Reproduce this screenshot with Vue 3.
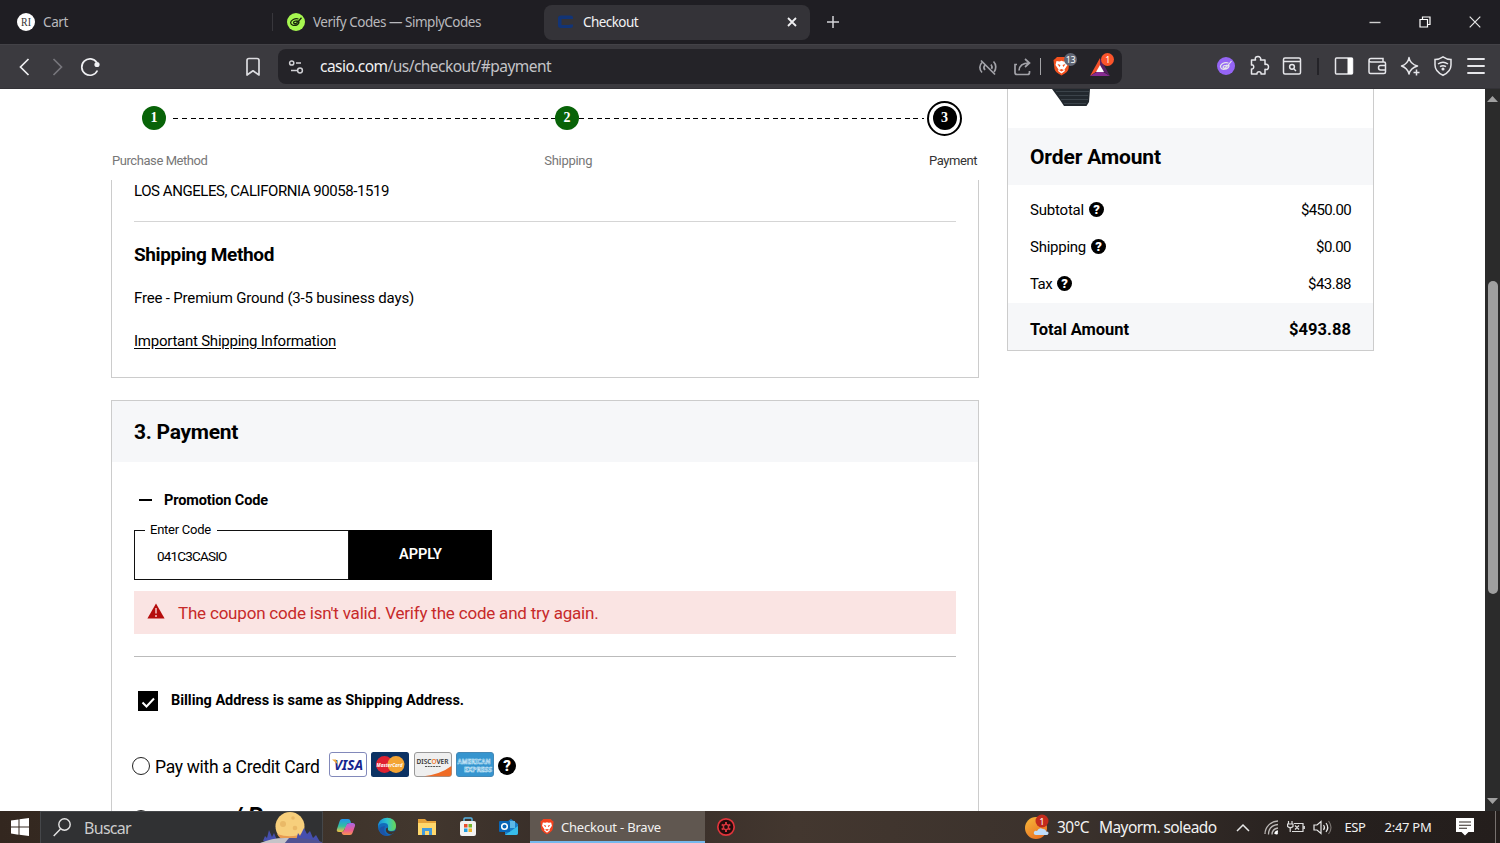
<script setup>
// Spreads or tightens the letters of a label so it takes up the given width.
const vFit = {
  mounted(el, { value }) {
    const natural = el.getBoundingClientRect().width
    const count = el.textContent.length
    el.style.letterSpacing = `${(value - natural) / count}px`
  },
}

const amounts = [
  { label: 'Subtotal', labelWidth: 54, value: '$450.00', valueWidth: 50 },
  { label: 'Shipping', labelWidth: 56, value: '$0.00', valueWidth: 35 },
  { label: 'Tax', labelWidth: 22, value: '$43.88', valueWidth: 43 },
]
</script>

<template>
  <div class="screen">
    <header class="tabs">
      <div class="tab tab-cart">
        <svg width="18" height="18" viewBox="0 0 18 18"><circle cx="9" cy="9" r="9" fill="#fff" /><text x="9" y="13" text-anchor="middle" font-family="Liberation Serif, serif" font-size="12" textLength="10" lengthAdjust="spacingAndGlyphs" fill="#333">RI</text></svg>
        <span v-fit="25">Cart</span>
      </div>
      <div class="tab tab-codes">
        <svg width="18" height="18" viewBox="0 0 18 18"><circle cx="9" cy="9" r="9" fill="#a6f750" /><path d="M11.500 6C8 5 3.600 7 3.600 9.800c.3 2.700 4.300 3.400 6.800 1.800 1.800-1.200 2-2.800.9-3.600M6.500 10c0-2 3.500-2.600 3.700-.9.100 1.600-3 2.300-3.700.9M9.500 7.500l1.500 1.300 3.500-4" fill="none" stroke="#17230c" stroke-width="1.300" /></svg>
        <span v-fit="168">Verify Codes — SimplyCodes</span>
      </div>
      <div class="tab tab-active">
        <svg width="17" height="16" viewBox="0 0 17 16"><path d="M16 5V3.500Q16 1.500 13.500 1.500H4Q1 1.500 1 4v7.500Q1 14 4 14h9.500q2.500 0 2.500-2V10.500h-3.500v.5H4.500V5H12.500z" fill="#123476" /></svg>
        <span v-fit="55">Checkout</span>
        <svg class="tab-close" width="10" height="10" viewBox="0 0 10 10"><path d="M1 1l8 8M9 1L1 9" stroke="#f0f0f2" stroke-width="1.800" /></svg>
      </div>
      <svg class="tab-new" width="12" height="12" viewBox="0 0 12 12"><path d="M6 0v12M0 6h12" stroke="#d4d4d8" stroke-width="1.500" /></svg>
      <div class="window-controls">
        <svg width="12" height="12" viewBox="0 0 12 12"><path d="M.5 6.500h11" stroke="#d0d0d0" stroke-width="1.400" /></svg>
        <svg width="12" height="12" viewBox="0 0 12 12"><path d="M1 3.500h7.500V11H1zM3.500 3.500V1H11v7.500H8.500" fill="none" stroke="#fff" stroke-width="1.200" /></svg>
        <svg width="12" height="12" viewBox="0 0 12 12"><path d="M.7.700l10.600 10.600M11.300.7L.7 11.300" stroke="#e8e8e8" stroke-width="1.200" /></svg>
      </div>
    </header>

    <nav class="toolbar">
      <svg class="tool back" viewBox="0 0 24 24"><path d="M15.500 4l-8 8 8 8" stroke="#efeff2" /></svg>
      <svg class="tool forward" viewBox="0 0 24 24"><path d="M8.500 4l8 8-8 8" stroke="#77767c" /></svg>
      <svg class="tool reload" viewBox="0 0 24 24"><path d="M19.400 15.500A8.200 8.200 0 1 1 18.800 7.500" stroke="#efeff2" /><circle cx="19" cy="9.500" r="2.600" fill="#efeff2" /></svg>
      <svg class="tool bookmark" viewBox="0 0 24 24"><path d="M6 20V5.500Q6 3.500 8 3.500h8q2 0 2 2V20l-6-4.200z" stroke="#dcdce0" stroke-linejoin="round" /></svg>
      <div class="address">
        <svg class="tune" width="16" height="16" viewBox="0 0 16 16"><g fill="none" stroke="#cfcfd3" stroke-width="1.500"><circle cx="3.700" cy="4" r="2.100" /><path d="M8 4h5M3 11.500h6" /><circle cx="12" cy="11.500" r="2.400" /></g></svg>
        <span class="url" v-fit="231"><b>casio.com</b>/us/checkout/#payment</span>
        <svg class="tool muted" viewBox="0 0 24 24"><path d="M5 5.500l14 14M6 17.500c-3-3-2.700-7.500 0-10M9 15c-1.300-1.500-1.300-3.400-.2-4.800M17.500 6.500c3 3 2.800 7.600.6 10.500M15 9.500c1.200 1.500 1.200 3 .6 4.300" stroke="#a2a2a8" /></svg>
        <svg class="tool share" viewBox="0 0 24 24"><path d="M7 9.500H5v8Q5 19.500 7 19.500h10.500q2 0 2-2V16M9 15.500c.4-4.500 3-7.500 10-7.500M15 4l4.500 4-4.500 4" stroke="#a2a2a8" /></svg>
        <i class="address-rule"></i>
        <span class="badge-icon brave">
          <svg width="17" height="20" viewBox="0 0 17 20"><path d="M4 1h9l2 2 1.500 1-1 9Q15 16 8.500 19.500 2 16 1.500 13L.5 4 2 3z" fill="#f4511e" /><path d="M3.500 5l3 .5 2-.7 2 .7 3-.5 1 4-3 4.500.4 1.500-3.400 2.500L5.100 15l.4-1.500L2.500 9z" fill="#fff" /><path d="M4.500 8l3 1-1 2zM12.500 8l-3 1 1 2zM6 14l2.500-1L11 14l-2.500 1.500z" fill="#f4511e" /></svg>
          <em class="grey">13</em>
        </span>
        <span class="badge-icon rewards">
          <svg width="20" height="18" viewBox="0 0 20 18"><path d="M10 0L0 18l10-7z" fill="#f4512b" /><path d="M0 18h20l-10-6z" fill="#872b91" /><path d="M10 0l10 18-10-7z" fill="#582064" /><path d="M10 7l4 7H6z" fill="#fff" /></svg>
          <em class="red">1</em>
        </span>
      </div>
      <div class="extensions">
        <svg viewBox="0 0 24 24"><circle cx="12" cy="12" r="9" fill="#9565f5" stroke="none" /><path d="M14.500 9C10 7.500 6 10.500 6.500 13.200c1 3.500 7.500 2.200 8.500-1 .3-1-1-1-1.500-1M9 13.200c0-2 3.500-2 3.300-.6-.2 1.800-3 2-3.300.6M12 11l1.500 1 4-5" stroke-width="1.200" /></svg>
        <svg viewBox="0 0 24 24"><path d="M4.500 6h4c-1-3 1-3.500 2.500-3.500S14.500 4 13.500 6h4.500v4.500c3-.8 3.500 1 3.500 2.500s-1 3.300-3.500 2.300V20H14c.7-3-4.500-3-4 0H4.500v-5c3 .6 3-5 0-4z" stroke-linejoin="round" /></svg>
        <svg viewBox="0 0 24 24"><rect x="3.500" y="4" width="17" height="16" rx="1.500" /><path d="M4 7.500h16" /><circle cx="12" cy="12.800" r="2.400" /><path d="M14 15l2 2" /></svg>
        <i></i>
        <svg viewBox="0 0 24 24"><rect x="3.500" y="4" width="17" height="16" rx="1" /><path d="M15.500 4H20.500V20H15.500z" fill="#fff" stroke="none" /></svg>
        <svg viewBox="0 0 24 24"><path d="M4 6.500Q4 4.500 6 4.500h12v3M4 6v12q0 1.500 1.500 1.500H19q1.500 0 1.500-1.500V9.500Q20.500 8 19 8H6Q4 8 4 6M20.500 11.500h-5q-2 0-2 2.200t2 2.200h5" /></svg>
        <svg viewBox="0 0 24 24"><path d="M11 3.500Q12 10 19.500 12q-7 2-8.500 8-1.500-6-7.500-8Q10 10 11 3.500z" stroke-linejoin="round" /><path d="M18.500 15.500v6M15.500 18.500h6" /></svg>
        <svg viewBox="0 0 24 24"><path d="M12 2.800Q16 5.500 20 5.500v5.500q0 6.500-8 10.300Q4 17.500 4 11V5.500q4 0 8-2.700z" /><path d="M7 10q5-3.500 10 0M9 12.700q3-2 6 0" /><circle cx="12" cy="15" r=".8" fill="#e6e6ea" /></svg>
        <svg viewBox="0 0 24 24"><path d="M3.300 5h17.400M3.300 12h17.400M3.300 19h17.400" stroke-width="1.800" /></svg>
      </div>
    </nav>

    <div class="viewport">
      <main class="checkout">
        <div class="stepper">
          <div class="track">
            <b class="dot">1</b><i class="dash first"></i><b class="dot">2</b><i class="dash"></i><span class="ring"><b class="dot current">3</b></span>
          </div>
          <div class="step-labels">
            <span v-fit="95.500">Purchase Method</span><span v-fit="48">Shipping</span><span class="now" v-fit="48">Payment</span>
          </div>
        </div>
        <section class="card shipping">
          <p class="city"><span v-fit="255">LOS ANGELES, CALIFORNIA 90058-1519</span></p>
          <h3><span v-fit="140">Shipping Method</span></h3>
          <p class="method"><span v-fit="280">Free - Premium Ground (3-5 business days)</span></p>
          <p class="info"><a v-fit="202">Important Shipping Information</a></p>
        </section>
        <section class="card payment">
          <h2><span v-fit="104">3. Payment</span></h2>
          <div class="payment-body">
            <div class="promo-title"><i></i><span v-fit="104">Promotion Code</span></div>
            <div class="promo">
              <div class="field"><label><span v-fit="61">Enter Code</span></label><span class="code" v-fit="69.500">041C3CASIO</span></div>
              <button><span v-fit="43">APPLY</span></button>
            </div>
            <div class="alert">
              <svg width="18" height="16" viewBox="0 0 18 16"><path d="M9 0.500L17.600 15.500H.4z" fill="#b50d0d" /><path d="M9 5v5.500M9 12v2" stroke="#f2b9b9" stroke-width="1.600" /></svg>
              <span v-fit="420.500">The coupon code isn't valid. Verify the code and try again.</span>
            </div>
            <div class="billing">
              <svg width="20" height="20" viewBox="0 0 20 20"><path d="M0 0h20v20H0z" /><path d="M4.500 11.500l4 4 7.500-8" fill="none" stroke="#fff" stroke-width="2" /></svg>
              <span v-fit="293">Billing Address is same as Shipping Address.</span>
            </div>
            <div class="credit">
              <i class="radio"></i>
              <span class="credit-label" v-fit="164.500">Pay with a Credit Card</span>
              <div class="brands">
                <svg viewBox="0 0 38 25"><rect x=".5" y=".5" width="37" height="24" rx="2.500" fill="#fff" stroke="#8289ba" /><text x="5" y="18" font-size="14.500" font-weight="bold" font-style="italic" textLength="29" lengthAdjust="spacingAndGlyphs" fill="#16258e">VISA</text><path d="M3 7.500h4l2 5z" fill="#eda93c" /></svg>
                <svg viewBox="0 0 38 25"><rect width="38" height="25" rx="2.500" fill="#0c3263" /><circle cx="13.500" cy="12.500" r="8.500" fill="#df2131" /><circle cx="25" cy="12.500" r="8.500" fill="#f3a434" /><text x="5.500" y="15" font-size="6" font-weight="bold" font-style="italic" textLength="26" lengthAdjust="spacingAndGlyphs" fill="#fff">MasterCard</text></svg>
                <svg viewBox="0 0 38 25"><rect x=".5" y=".5" width="37" height="24" rx="2.500" fill="#efefef" stroke="#999" /><path d="M10 24.300Q27 22 37.400 14v8q0 2.300-2 2.300z" fill="#ef6b25" /><text x="2.500" y="12" font-size="7.800" font-weight="600" textLength="32" lengthAdjust="spacingAndGlyphs" fill="#333">DISC<tspan fill="#ef7a2f">O</tspan>VER</text><path d="M11 14.500h16" stroke="#555" stroke-width="1" stroke-dasharray="2 .7" /></svg>
                <svg viewBox="0 0 38 25"><rect x=".5" y=".5" width="37" height="24" rx="2.500" fill="#3695cf" stroke="#4588b5" /><g font-size="7.500" font-weight="bold" fill="#2989c4" stroke="#d7effc" stroke-width=".6"><text x="1.500" y="12" textLength="33" lengthAdjust="spacingAndGlyphs">AMERICAN</text><text x="8" y="20" textLength="28" lengthAdjust="spacingAndGlyphs">EXPRESS</text></g></svg>
              </div>
              <b class="help large">?</b>
            </div>
            <div class="next-option"><i class="radio"></i><span>/ P</span></div>
          </div>
        </section>
      </main>

      <aside class="summary">
        <div class="product"><svg width="42" height="18" viewBox="0 0 42 18"><path d="M1 0h38l-1 13-2.500 4H13L9 11z" fill="#22282e" /><path d="M5 2.500h33M8 6.500h29M10 10.500h27M13 14.500h22" stroke="#3b434a" /></svg></div>
        <h2><span v-fit="131">Order Amount</span></h2>
        <div class="lines">
          <div v-for="row in amounts" :key="row.label" class="line">
            <span v-fit="row.labelWidth">{{ row.label }}</span><b class="help">?</b>
            <span class="value" v-fit="row.valueWidth">{{ row.value }}</span>
          </div>
        </div>
        <div class="total"><span v-fit="99">Total Amount</span><span v-fit="62">$493.88</span></div>
      </aside>

      <div class="scrollbar">
        <svg width="11" height="6" viewBox="0 0 11 6"><path d="M5.500 0L11 6H0z" fill="#a0a0a0" /></svg>
        <i></i>
        <svg width="11" height="6" viewBox="0 0 11 6"><path d="M5.500 6L11 0H0z" fill="#a0a0a0" /></svg>
      </div>
    </div>

    <footer class="taskbar">
      <div class="start"><svg width="18" height="18" viewBox="0 0 18 18"><path d="M0 2.500L7.500 1.400v7.200H0zM8.500 1.200L18 0v8.600H8.500zM0 9.500h7.500v7.200L0 15.600zM8.500 9.500H18V18l-9.500-1.200z" fill="#fff" /></svg></div>
      <div class="search">
        <svg class="glass" width="18" height="19" viewBox="0 0 18 19"><g fill="none" stroke="#e5e5e5" stroke-width="1.400"><circle cx="11.500" cy="6.500" r="5.700" /><path d="M7.500 11L.7 18" /></g></svg>
        <span v-fit="47">Buscar</span>
        <svg class="moon" width="64" height="32" viewBox="0 0 64 32"><circle cx="32" cy="14.500" r="14.500" fill="#f7cf7c" /><path d="M19 22a14.500 14.500 0 0 0 26-1Q34 27 19 22z" fill="#e89b51" /><g fill="#eab967"><circle cx="25" cy="12" r="3" /><circle cx="35" cy="6" r="1.800" /><circle cx="37" cy="16" r="2.300" /></g><path d="M5 29l2-5 2 2 2-8 3 7 2-4 3 7 3 3zM38 29l2-8 2 3 4-8 3 6 3-3 3 7 3-3 4 7v2z" fill="#454fae" /><path d="M0 32q15-7 35-6 18 0 29 4v2z" fill="#505392" /><path d="M0 32q14-7 31-6l-5 6z" fill="#c6c4c8" /></svg>
      </div>
      <div class="apps">
        <svg viewBox="0 0 20 20"><defs><linearGradient id="copA" x2="0" y2="1"><stop stop-color="#2493ed" /><stop offset=".55" stop-color="#31bf9f" /><stop offset="1" stop-color="#f6c13e" /></linearGradient><linearGradient id="copB" x2="0" y2="1"><stop stop-color="#a666e8" /><stop offset=".6" stop-color="#ec5c92" /><stop offset="1" stop-color="#f79550" /></linearGradient></defs><path d="M14 6h3q2.500.5 2 3l-2.500 7q-.6 2-2.500 2H8q-2 0-2.500-3 2 0 2.700-2l1.500-5Q10.500 6 14 6z" fill="url(#copB)" /><path d="M6 2h6q2 0 2.500 2l.5 2h-2q-2 0-2.500 2L8 13q-.6 2-2.500 2H3q-3 0-2-3L3.500 4.500Q4 2 6 2z" fill="url(#copA)" /></svg>
        <svg viewBox="0 0 20 20"><defs><linearGradient id="edge"><stop stop-color="#168bd8" /><stop offset=".5" stop-color="#2ec4cf" /><stop offset="1" stop-color="#6bd750" /></linearGradient></defs><circle cx="10" cy="10" r="9" fill="#126cbb" /><path d="M1 10C1-2 19-2 19 9q0 5-5 5-4 0-3-3 1-5-4-5Q2 6 1 10z" fill="url(#edge)" /><path d="M11 10.500q-1 4 3 4 3 0 4.500-1-1.500 3-4.500 4-6-1-5-6z" fill="#3d332d" /><path d="M8 9q-3 7 4 9.500Q6 20 3 15t5-6z" fill="#1c54a8" /></svg>
        <svg viewBox="0 0 20 20"><path d="M1 2h7l2 2h9v14H1z" fill="#e5a33a" /><path d="M1 6h18v12H1z" fill="#ffd86c" /><path d="M5 18v-7h10v7h-3v-4H8v4z" fill="#429bdc" /></svg>
        <svg viewBox="0 0 20 20"><path d="M6 5V2q0-1 1-1h6q1 0 1 1v3" fill="none" stroke="#58b4e4" stroke-width="1.500" /><rect x="2" y="4" width="16" height="15" rx="2" fill="#f2f2f2" /><path d="M6 7h3.500v3.500H6z" fill="#e84f2d" /><path d="M10.500 7H14v3.500h-3.500z" fill="#75b72c" /><path d="M6 11.500h3.500V15H6z" fill="#219fe1" /><path d="M10.500 11.500H14V15h-3.500z" fill="#eeb22b" /></svg>
        <svg viewBox="0 0 20 20"><path d="M7 6l6-4 7 5v9q0 2-2 2H7z" fill="#1a7fc9" /><path d="M9 4h8v7H9z" fill="#5cb8e8" /><path d="M7 18l13-9v7q0 2-2 2z" fill="#38bdeb" /><rect x="1" y="4" width="11" height="11" rx="1" fill="#0966b6" /><circle cx="6.500" cy="9.500" r="2.800" fill="none" stroke="#fff" stroke-width="1.500" /></svg>
      </div>
      <div class="running">
        <svg width="14" height="17" viewBox="0 0 17 20"><path d="M4 1h9l2 2 1.500 1-1 9Q15 16 8.500 19.500 2 16 1.500 13L.5 4 2 3z" fill="#f4421e" /><path d="M3.500 5l3 .5 2-.7 2 .7 3-.5 1 4-3 4.500.4 1.500-3.400 2.500L5.100 15l.4-1.500L2.500 9z" fill="#fff" /><path d="M4.500 8l3 1-1 2zM12.500 8l-3 1 1 2zM6 14l2.500-1L11 14l-2.500 1.500z" fill="#f4421e" /></svg>
        <span v-fit="100">Checkout - Brave</span>
      </div>
      <svg class="recorder" width="20" height="20" viewBox="0 0 20 20"><circle cx="10" cy="10" r="8.200" fill="#230c0c" stroke="#e0343b" stroke-width="1.700" /><path d="M10 5v10M5.700 7.500l8.600 5M14.300 7.500l-8.600 5" stroke="#d7353d" stroke-width="2" /><circle cx="10" cy="10" r="3.300" fill="#d7353d" /><circle cx="10" cy="10" r="1.900" fill="#230c0c" /></svg>
      <div class="tray">
        <svg class="weather" width="26" height="26" viewBox="0 0 26 26"><defs><linearGradient id="sun" x2=".7" y2="1"><stop stop-color="#f7ba3a" /><stop offset="1" stop-color="#e97022" /></linearGradient></defs><circle cx="12" cy="14" r="11" fill="url(#sun)" /><path d="M12 21q-3-.5-2-3 1-2 3-1 2-4 6-2 3 0 3 2.500 3-.5 2.500 2-.4 1.500-2 1.500z" fill="#bfdcf9" /><circle cx="18" cy="7" r="6.500" fill="#c42b1c" /><text x="18" y="10.500" text-anchor="middle" font-size="9.500" fill="#fff">1</text></svg>
        <span class="temp" v-fit="32">30°C</span>
        <span class="sky" v-fit="117.500">Mayorm. soleado</span>
        <svg class="chevron" width="14" height="9" viewBox="0 0 14 9"><path d="M1 8l6-6 6 6" fill="none" stroke="#e8e8e8" stroke-width="1.500" /></svg>
        <svg class="wifi" width="15" height="15" viewBox="0 0 15 15"><g fill="none" stroke="#bcb8b6" stroke-width="1.300"><path d="M1 14C1 7 7 1 14 1M4.500 14.500q0-9 9.500-10M8 14.500q0-5.500 6-6.500" /><path d="M11 14q0-2.500 3-3" stroke="#fff" /></g><circle cx="12.500" cy="13" r="1.500" fill="#fff" /></svg>
        <svg class="battery" width="18" height="14" viewBox="0 0 18 14"><g fill="none" stroke="#ddd" stroke-width="1.200"><path d="M1.500 1v3M5 1v3M.6 4h5.400v2.500q-2.500 2.500-5.400 0zM3.200 8v4M7 3.500h9v8H5M17.300 6v3M8 5.500l4 4M12 5.500l-4 4" /></g></svg>
        <svg class="volume" width="19" height="15" viewBox="0 0 19 15"><g fill="none" stroke="#e8e8e8" stroke-width="1.200"><path d="M1 5h3l4-3.500v12L4 10H1zM10.500 5q2 2.500 0 5M13 3q3.500 4.500 0 9" /><path d="M15.500 1q5 6.500 0 13" stroke="#77716e" /></g></svg>
        <span class="lang" v-fit="21">ESP</span>
        <span class="clock" v-fit="47">2:47 PM</span>
        <svg class="notes" width="18" height="18" viewBox="0 0 18 18"><path d="M0 0h18v14h-5.500L9 17.500 5.500 14H0z" fill="#fff" /><path d="M3 4h12M3 7.200h12M3 10.300h8" stroke="#302824" stroke-width="1.100" /></svg>
        <i class="peek"></i>
      </div>
    </footer>
  </div>
</template>

<style>
body { overflow: hidden; }
</style>

<style scoped>
* { box-sizing: border-box; }
svg { display: block; flex: none; }
span { white-space: nowrap; }
h2, h3, p { margin: 0; }
.screen { width: 1500px; height: 843px; display: flex; flex-direction: column; overflow: hidden; background: #fff; font-family: Roboto, "Liberation Sans", sans-serif; color: #000; }

.tabs { height: 44px; flex: none; display: flex; align-items: center; background: #1f1e23; font-family: "Noto Sans", sans-serif; font-size: 13.500px; color: #b9b9bd; }
.tab { display: flex; align-items: center; flex: none; }
.tab-cart { width: 272px; padding-left: 17px; gap: 8px; }
.tab-codes { width: 272px; height: 18px; padding-left: 14px; gap: 8px; border-left: 1px solid #38373c; }
.tab-active { width: 266px; height: 35px; padding: 0 13px; gap: 9px; border-radius: 8px; background: #343338; color: #f2f2f4; }
.tab-close { margin-left: auto; }
.tab-new { margin-left: 17px; }
.window-controls { display: flex; gap: 38px; margin: 0 19px 0 auto; }

.toolbar { height: 45px; flex: none; display: flex; align-items: center; background: #3b3a3f; border-top: 1px solid #434247; border-bottom: 1px solid #333237; }
.tool { width: 24px; height: 24px; fill: none; stroke-width: 1.7; }
.back { margin-left: 13px; }
.forward { margin-left: 8px; }
.reload { margin-left: 9px; }
.bookmark { margin-left: 139px; }
.address { width: 844px; height: 35px; margin-left: 13px; flex: none; display: flex; align-items: center; border-radius: 8px; background: #242328; }
.tune { margin-left: 10px; }
.url { margin: 0 0 1px 16px; font: 15.500px "Noto Sans", sans-serif; color: #c3c3c7; }
.url b { font-weight: 400; color: #f1f1f3; }
.muted { margin-left: auto; }
.share { margin-left: 10px; }
.address-rule { width: 1px; height: 17px; margin-left: 6px; background: #a3a3a6; }
.badge-icon { position: relative; display: block; }
.brave { margin: 0 0 2px 12px; }
.rewards { margin: 0 12px 0 20px; }
.badge-icon em { position: absolute; left: 11px; top: -5px; width: 13px; height: 13px; border-radius: 50%; font: 9px/13px "Noto Sans", sans-serif; color: #fff; text-align: center; letter-spacing: -0.4px; }
.badge-icon .grey { top: -3px; background: #616674; }
.badge-icon .red { background: #fb542b; }
.extensions { display: flex; align-items: center; gap: 9px; margin: 0 0 1px 92px; }
.extensions svg { width: 24px; height: 24px; fill: none; stroke: #e6e6ea; stroke-width: 1.5; }
.extensions i { width: 2px; height: 17px; margin: 0 4px; background: #242328; }

.viewport { height: 722px; flex: none; display: flex; align-items: flex-start; overflow: hidden; background: #fff; }
.checkout { width: 868px; flex: none; margin-left: 111px; }
.stepper { height: 91px; padding-top: 11px; }
.track { display: flex; align-items: center; height: 36px; padding: 0 17px 0 31px; }
.dot { width: 24px; height: 24px; flex: none; border-radius: 50%; background: #086308; color: #fff; font: bold 14px/24px "Liberation Serif", serif; text-align: center; }
.dot.current { background: #000; }
.ring { width: 35px; height: 35px; flex: none; display: flex; align-items: center; justify-content: center; margin-left: 3px; border: 2px solid #000; border-radius: 50%; }
.dash { flex: 1; height: 1px; background: repeating-linear-gradient(90deg, #000 0 5px, transparent 5px 8.8px); }
.dash.first { flex: none; width: 382px; margin-left: 7px; }
.step-labels { display: flex; justify-content: space-between; padding: 0 2px 0 1px; margin-top: 15px; font-size: 13px; line-height: 20px; color: #777; }
.step-labels .now { color: #333; }
.card { border: 1px solid #ccc; }
.shipping { height: 198px; padding: 0 22px; border-top: 0; font-size: 15px; }
.city { height: 42px; line-height: 22px; border-bottom: 1px solid #d5d5d5; }
h3 { margin-top: 21px; font-size: 19px; font-weight: 700; line-height: 24px; }
.method { margin-top: 21px; line-height: 21px; }
.info { margin-top: 22px; line-height: 21px; }
.info a { display: inline-block; text-decoration: underline; text-underline-offset: 2px; }
.payment { height: 500px; margin-top: 22px; }
.payment h2 { height: 61px; padding-left: 22px; background: #f6f7f9; font-size: 21px; font-weight: 700; line-height: 63px; }
.payment-body { padding: 28px 22px 0; }
.promo-title { display: flex; align-items: center; height: 20px; padding-left: 5px; font-size: 14.500px; font-weight: 700; }
.promo-title i { width: 13px; height: 2px; margin-right: 12px; background: #000; }
.promo { display: flex; width: 358px; height: 50px; margin-top: 20px; }
.field { position: relative; width: 215px; border: 1px solid #111; }
.field label { position: absolute; left: 10px; top: -9px; padding: 0 6px 0 5px; background: #fff; font-size: 13px; line-height: 16px; }
.code { display: inline-block; margin: 15px 0 0 22px; font-size: 13.500px; line-height: 20px; }
button { flex: 1; padding: 0 0 2px; border: 0; background: #000; color: #fff; font: 600 14.500px Roboto, sans-serif; }
.alert { display: flex; align-items: center; height: 43px; margin-top: 11px; padding-left: 13px; gap: 13px; background: #fae4e3; color: #c72a2a; font-size: 17px; }
.alert svg { margin-bottom: 3px; }
.billing { display: flex; align-items: center; height: 55px; margin-top: 22px; padding: 34px 0 0 3.500px; gap: 13.500px; border-top: 1px solid #bbb; font-size: 14.500px; font-weight: 700; }
.billing span { margin-bottom: 1px; }
.credit { display: flex; align-items: center; height: 26px; margin: 42px 0 0 -2px; }
.radio { width: 18px; height: 18px; flex: none; border: 1px solid #222; border-radius: 50%; }
.credit-label { margin-left: 5px; font-size: 17.500px; line-height: 20px; padding-top: 1px; }
.brands { display: flex; gap: 4.400px; margin: -3px 4px 0 9.500px; }
.brands svg { width: 38px; height: 25px; font-family: "Noto Sans", sans-serif; }
.help { width: 15px; height: 15px; flex: none; border-radius: 50%; background: #000; color: #fff; font: 900 13px/15px Roboto, sans-serif; text-align: center; }
.help.large { width: 18px; height: 18px; font-size: 15px; line-height: 18px; }
.next-option { display: flex; align-items: flex-start; margin: 31px 0 0 -2px; }
.next-option span { margin: -6px 0 0 83px; font: italic bold 24px/24px Roboto, sans-serif; }

.summary { width: 367px; height: 262px; flex: none; margin-left: 28px; border: 1px solid #ccc; border-top: 0; }
.product { height: 39px; padding-left: 43px; }
.summary h2 { height: 57px; padding-left: 22px; background: #f6f7f9; font-size: 21px; font-weight: 700; line-height: 58px; }
.lines { height: 118px; padding: 6px 22px 0; }
.line { display: flex; align-items: center; height: 37px; font-size: 15px; }
.line .help { margin-left: 5px; }
.value { margin-left: auto; }
.total { display: flex; justify-content: space-between; height: 47px; padding: 0 22px; background: #f6f7f9; font-size: 16.500px; font-weight: 700; line-height: 53px; }
.scrollbar { width: 15px; height: 722px; margin-left: auto; display: flex; flex-direction: column; align-items: center; padding: 7px 0; background: #2b2b2b; }
.scrollbar i { width: 10px; height: 313px; margin: 179px 0 auto; border-radius: 5px; background: #9f9f9f; }

.taskbar { height: 32px; flex: none; display: flex; align-items: center; background: linear-gradient(90deg, #33271f 0, #42372e 28%, #352b27 40%, #43372f 53%, #3a312c 72%, #26201e 88%, #241e1c); font-family: "Noto Sans", sans-serif; color: #f2f2f2; }
.start { width: 40px; padding-left: 11px; }
.search { width: 283px; height: 32px; display: flex; align-items: center; border: 1px solid #45474a; border-bottom: 0; background: #303133; font-size: 16px; color: #ccc; }
.glass { margin: 0 13px 0 12px; }
.moon { margin-left: auto; }
.apps { width: 207px; display: flex; gap: 20.500px; padding-left: 13px; }
.apps svg { width: 20px; height: 20px; }
.running { width: 175px; height: 32px; display: flex; align-items: center; padding-left: 10px; gap: 7px; border-bottom: 2px solid #76b9ed; background: #605750; font-size: 13px; }
.running span { padding-top: 1px; }
.recorder { margin-left: 11px; }
.tray { flex: 1; display: flex; align-items: center; margin-left: 288px; font-size: 13px; }
.temp, .sky { font-size: 15.500px; }
.temp { margin-left: 7px; }
.sky { margin-left: 10px; }
.chevron { margin-left: 19px; }
.wifi { margin-left: 14px; }
.battery { margin-left: 8px; }
.volume { margin-left: 8px; }
.lang { margin-left: 13px; }
.clock { margin-left: 19px; }
.notes { margin-left: 24px; }
.peek { width: 1px; height: 32px; margin: 0 4px 0 auto; background: #77716e; }
</style>
